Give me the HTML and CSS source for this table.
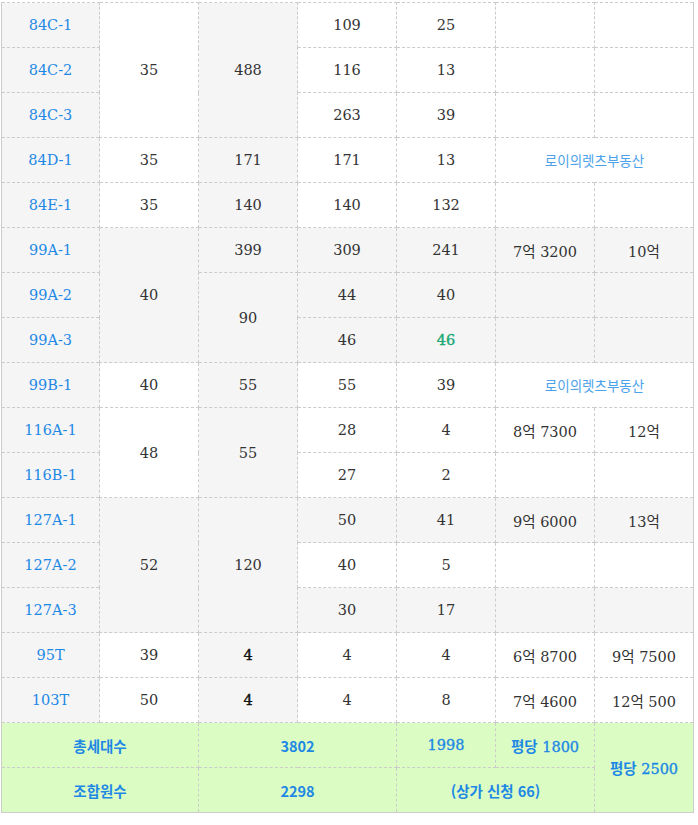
FILE: index.html
```html
<!DOCTYPE html>
<html lang="ko">
<head>
<meta charset="utf-8">
<link rel="stylesheet" href="styles.css">
</head>
<body>
<div class="wrap">
<table class="tbl">
  <colgroup>
    <col class="c1"><col class="c"><col class="c"><col class="c"><col class="c"><col class="c"><col class="c">
  </colgroup>
  <tbody>
    <tr><td class="lab">84C-1</td><td rowspan="3">35</td><td class="g" rowspan="3">488</td><td>109</td><td>25</td><td></td><td></td></tr>
    <tr><td class="lab">84C-2</td><td>116</td><td>13</td><td></td><td></td></tr>
    <tr><td class="lab">84C-3</td><td>263</td><td>39</td><td></td><td></td></tr>
    <tr><td class="lab">84D-1</td><td>35</td><td class="g">171</td><td>171</td><td>13</td><td class="agent" colspan="2">로이의렛츠부동산</td></tr>
    <tr><td class="lab">84E-1</td><td>35</td><td class="g">140</td><td>140</td><td>132</td><td></td><td></td></tr>
    <tr class="gr"><td class="lab">99A-1</td><td rowspan="3">40</td><td>399</td><td>309</td><td>241</td><td>7억 3200</td><td>10억</td></tr>
    <tr class="gr"><td class="lab">99A-2</td><td rowspan="2">90</td><td>44</td><td>40</td><td></td><td></td></tr>
    <tr class="gr"><td class="lab">99A-3</td><td>46</td><td class="grn">46</td><td></td><td></td></tr>
    <tr><td class="lab">99B-1</td><td>40</td><td class="g">55</td><td>55</td><td>39</td><td class="agent" colspan="2">로이의렛츠부동산</td></tr>
    <tr><td class="lab">116A-1</td><td rowspan="2">48</td><td class="g" rowspan="2">55</td><td>28</td><td>4</td><td>8억 7300</td><td>12억</td></tr>
    <tr><td class="lab">116B-1</td><td>27</td><td>2</td><td></td><td></td></tr>
    <tr class="gr"><td class="lab">127A-1</td><td rowspan="3">52</td><td rowspan="3">120</td><td>50</td><td>41</td><td>9억 6000</td><td>13억</td></tr>
    <tr><td class="lab">127A-2</td><td>40</td><td>5</td><td></td><td></td></tr>
    <tr class="gr"><td class="lab">127A-3</td><td>30</td><td>17</td><td></td><td></td></tr>
    <tr><td class="lab">95T</td><td>39</td><td class="g strong">4</td><td>4</td><td>4</td><td>6억 8700</td><td>9억 7500</td></tr>
    <tr><td class="lab">103T</td><td>50</td><td class="g strong">4</td><td>4</td><td>8</td><td>7억 4600</td><td>12억 500</td></tr>
    <tr class="tot"><td colspan="2"><span class="k">총세대수</span></td><td colspan="2" class="sans">3802</td><td class="semi">1998</td><td class="semi"><span class="k">평당</span> 1800</td><td rowspan="2" class="semi"><span class="k">평당</span> 2500</td></tr>
    <tr class="tot"><td colspan="2"><span class="k">조합원수</span></td><td colspan="2" class="sans">2298</td><td colspan="2" class="sans">(상가 신청 66)</td></tr>
  </tbody>
</table>
</div>
</body>
</html>
```

FILE: styles.css
```css
html, body {
  margin: 0;
  padding: 0;
  background: #ffffff;
}

.wrap {
  padding: 2px 0 0 1px;
}

.tbl {
  border-collapse: collapse;
  table-layout: fixed;
  width: 693px;
  border-left: 1px solid #cccccc;
  border-right: 1px solid #cccccc;
  border-bottom: 1px solid #cccccc;
  font-family: "DejaVu Serif", "Noto Sans CJK KR", serif;
  font-size: 14.5px;
  color: #333333;
}

.c1 { width: 98px; }
.c { width: 99px; }

.tbl td {
  height: 44px;
  padding: 0;
  text-align: center;
  vertical-align: middle;
  border: 1px dashed #cccccc;
  background: #ffffff;
}

.tbl td.lab {
  background: #f5f5f5;
  color: #1e88e5;
  border-left: 1px solid #cccccc;
}

.tbl td.g,
.tbl tr.gr td {
  background: #f5f5f5;
}

.tbl td.grn {
  color: #1aa874;
  -webkit-text-stroke: 0.4px #1aa874;
}

.tbl td.strong {
  color: #111111;
  -webkit-text-stroke: 0.4px #111111;
}

.tbl td.agent {
  font-family: "Noto Sans CJK KR", sans-serif;
  font-size: 13.5px;
  color: #4ba2ea;
}

.tbl tr.tot td {
  background: #dbfdc3;
  color: #1e88e5;
  font-family: "DejaVu Serif", "Noto Sans CJK KR", sans-serif;
}

.tbl tr.tot td.semi {
  -webkit-text-stroke: 0.35px #1e88e5;
}

.tbl tr.tot .k {
  font-family: "Noto Sans CJK KR", sans-serif;
  font-weight: 700;
  -webkit-text-stroke: 0;
}

.tbl tr.tot td.sans {
  font-family: "Noto Sans CJK KR", sans-serif;
  font-weight: 600;
}
```
